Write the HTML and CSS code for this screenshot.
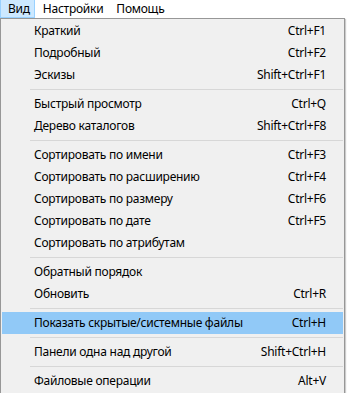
FILE: index.html
```html
<!DOCTYPE html>
<html lang="ru">
<head>
    <meta charset="UTF-8">
    <title>Вид</title>
    <link rel="stylesheet" href="styles.css">
</head>
<body>
    <div class="menubar">
        <span class="menubar-item active">Вид</span>
        <span class="menubar-item">Настройки</span>
        <span class="menubar-item">Помощь</span>
    </div>

    <div class="menu">
        <div class="item"><span>Краткий</span><span class="key">Ctrl+F1</span></div>
        <div class="item"><span>Подробный</span><span class="key">Ctrl+F2</span></div>
        <div class="item"><span>Эскизы</span><span class="key">Shift+Ctrl+F1</span></div>
        <div class="sep"></div>
        <div class="item"><span>Быстрый просмотр</span><span class="key">Ctrl+Q</span></div>
        <div class="item"><span>Дерево каталогов</span><span class="key">Shift+Ctrl+F8</span></div>
        <div class="sep"></div>
        <div class="item"><span>Сортировать по имени</span><span class="key">Ctrl+F3</span></div>
        <div class="item"><span>Сортировать по расширению</span><span class="key">Ctrl+F4</span></div>
        <div class="item"><span>Сортировать по размеру</span><span class="key">Ctrl+F6</span></div>
        <div class="item"><span>Сортировать по дате</span><span class="key">Ctrl+F5</span></div>
        <div class="item"><span>Сортировать по атрибутам</span><span class="key"></span></div>
        <div class="sep"></div>
        <div class="item"><span>Обратный порядок</span><span class="key"></span></div>
        <div class="item"><span>Обновить</span><span class="key">Ctrl+R</span></div>
        <div class="sep"></div>
        <div class="item selected"><span>Показать скрытые/системные файлы</span><span class="key">Ctrl+H</span></div>
        <div class="sep"></div>
        <div class="item"><span>Панели одна над другой</span><span class="key">Shift+Ctrl+H</span></div>
        <div class="sep"></div>
        <div class="item"><span>Файловые операции</span><span class="key">Alt+V</span></div>
    </div>
</body>
</html>
```

FILE: styles.css
```css
body {
    margin: 0;
    background-color: #ffffff;
    font-family: "Noto Sans", Arial, sans-serif;
    font-size: 12px;
    letter-spacing: -0.25px;
    color: #000000;
    overflow: hidden;
}

/* строка меню */
.menubar {
    display: flex;
    height: 18px;
    background-color: #ffffff;
}
.menubar-item {
    padding: 0 4px 0 7px;
    line-height: 17px;
    border: 1px solid transparent;
    border-top: 0;
}
.menubar-item.active {
    background-color: #cce8ff;
    border-color: #99d1ff;
}

/* выпадающее меню */
.menu {
    width: 343px;
    padding: 1px 0;
    background-color: #f0f0f0;
    border: 1px solid #979797;
    box-shadow: 1px 1px 1px rgba(0, 0, 0, 0.2);
}
.item {
    display: flex;
    justify-content: space-between;
    height: 22px;
    line-height: 22px;
    margin: 0 1px;
    padding: 0 17px 0 32px;
}
.item.selected {
    background-color: #91c9f7;
}
.sep {
    height: 1px;
    margin: 3px 1px 3px 29px;
    background-color: #d7d7d7;
}
```
